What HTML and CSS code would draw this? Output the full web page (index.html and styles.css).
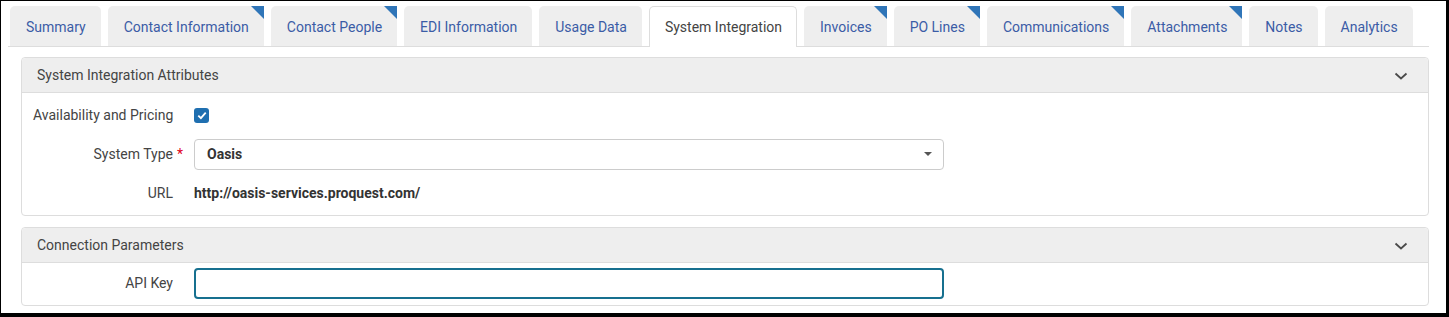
FILE: index.html
```html
<!DOCTYPE html>
<html lang="en">
<head>
  <meta charset="UTF-8">
  <title>Vendor - System Integration</title>
  <link rel="stylesheet" href="styles.css">
</head>
<body>
  <div class="frame">
    <!-- Vendor tabs -->
    <ul class="tabs">
      <li class="tab">Summary</li>
      <li class="tab flagged">Contact Information</li>
      <li class="tab flagged">Contact People</li>
      <li class="tab">EDI Information</li>
      <li class="tab">Usage Data</li>
      <li class="tab active">System Integration</li>
      <li class="tab flagged">Invoices</li>
      <li class="tab flagged">PO Lines</li>
      <li class="tab flagged">Communications</li>
      <li class="tab flagged">Attachments</li>
      <li class="tab">Notes</li>
      <li class="tab">Analytics</li>
    </ul>

    <!-- System integration attributes -->
    <section class="panel">
      <header class="panel-head">
        <span>System Integration Attributes</span>
        <svg class="chevron" width="14" height="8" viewBox="0 0 14 8"><path d="M1.5 1.5 L7 6.5 L12.5 1.5" fill="none" stroke="#4a4a4a" stroke-width="1.8"/></svg>
      </header>
      <div class="panel-body attrs">
        <div class="field">
          <label class="field-label">Availability and Pricing</label>
          <span class="checkbox">
            <svg width="10" height="9" viewBox="0 0 10 9"><path d="M1.3 4.6 L3.9 7.2 L8.7 1.6" fill="none" stroke="#fff" stroke-width="1.8"/></svg>
          </span>
        </div>
        <div class="field">
          <label class="field-label">System Type<span class="required">*</span></label>
          <div class="select">
            <span>Oasis</span>
            <span class="caret"></span>
          </div>
        </div>
        <div class="field">
          <label class="field-label">URL</label>
          <span class="value">http://oasis-services.proquest.com/</span>
        </div>
      </div>
    </section>

    <!-- Connection parameters -->
    <section class="panel">
      <header class="panel-head">
        <span>Connection Parameters</span>
        <svg class="chevron" width="14" height="8" viewBox="0 0 14 8"><path d="M1.5 1.5 L7 6.5 L12.5 1.5" fill="none" stroke="#4a4a4a" stroke-width="1.8"/></svg>
      </header>
      <div class="panel-body params">
        <div class="field">
          <label class="field-label">API Key</label>
          <input class="text-input" type="text">
        </div>
      </div>
    </section>
  </div>
</body>
</html>
```

FILE: styles.css
```css
* {
  margin: 0;
  padding: 0;
  box-sizing: border-box;
}
body {
  font-family: Roboto, "Liberation Sans", sans-serif;
  font-size: 14px;
  color: #444;
  background: #fff;
}
/* Screenshot frame */
.frame {
  width: 1449px;
  height: 317px;
  border-style: solid;
  border-color: #000;
  border-width: 1px 3px 4px 1px;
  padding: 5px 17px 6px 7px;
  overflow: hidden;
}
/* Tabs */
.tabs {
  list-style: none;
  display: flex;
  gap: 7px;
  padding-left: 2px;
  border-bottom: 1px solid #ddd;
}
.tab {
  position: relative;
  height: 40px;
  line-height: 42px;
  padding: 0 15px 0 16px;
  background: #eee;
  color: #3b5ca6;
  border-radius: 5px 5px 0 0;
  white-space: nowrap;
}
.tab.flagged::after {
  content: "";
  position: absolute;
  top: 0;
  right: 0;
  border-top: 13px solid #2f75b8;
  border-left: 13px solid transparent;
}
.tab.active {
  background: #fff;
  color: #444;
  border: 1px solid #ddd;
  border-bottom: none;
  height: 41px;
  margin-bottom: -1px;
  line-height: 41px;
  padding: 0 14px 0 15px;
}
/* Panels */
.panel {
  margin: 10px 0 0 13px;
  border: 1px solid #ddd;
  border-radius: 4px;
}
.panel + .panel {
  margin-top: 11px;
}
.panel-head {
  display: flex;
  align-items: center;
  justify-content: space-between;
  height: 35px;
  padding: 0 20px 0 15px;
  background: #eee;
  border-bottom: 1px solid #ddd;
  border-radius: 4px 4px 0 0;
  color: #444;
}
.chevron {
  margin-top: 2px;
}
.panel-body {
  display: flex;
  flex-direction: column;
  padding: 0 11px;
}
.attrs {
  gap: 9px;
  padding-top: 7px;
  padding-bottom: 7px;
}
.params {
  padding-top: 5px;
  padding-bottom: 7px;
}
.field {
  display: flex;
  align-items: center;
  gap: 21px;
  height: 30px;
}
.field-label {
  width: 140px;
  text-align: right;
  color: #444;
  white-space: nowrap;
}
.required {
  color: #e0001b;
  margin-left: 4px;
  margin-right: -10px;
}
.checkbox {
  width: 15px;
  height: 15px;
  border-radius: 3px;
  background: #1f6fb0;
  display: flex;
  align-items: center;
  justify-content: center;
}
.select {
  width: 750px;
  height: 31px;
  border: 1px solid #ccc;
  border-radius: 4px;
  display: flex;
  align-items: center;
  justify-content: space-between;
  padding: 0 11px 0 12px;
  font-weight: bold;
  color: #333;
}
.caret {
  border-top: 4px solid #555;
  border-left: 4px solid transparent;
  border-right: 4px solid transparent;
}
.value {
  font-weight: bold;
  color: #333;
}
.text-input {
  width: 750px;
  height: 31px;
  border: 2px solid #17708f;
  border-radius: 4px;
  outline: none;
  font: inherit;
  padding: 0 10px;
}
```
